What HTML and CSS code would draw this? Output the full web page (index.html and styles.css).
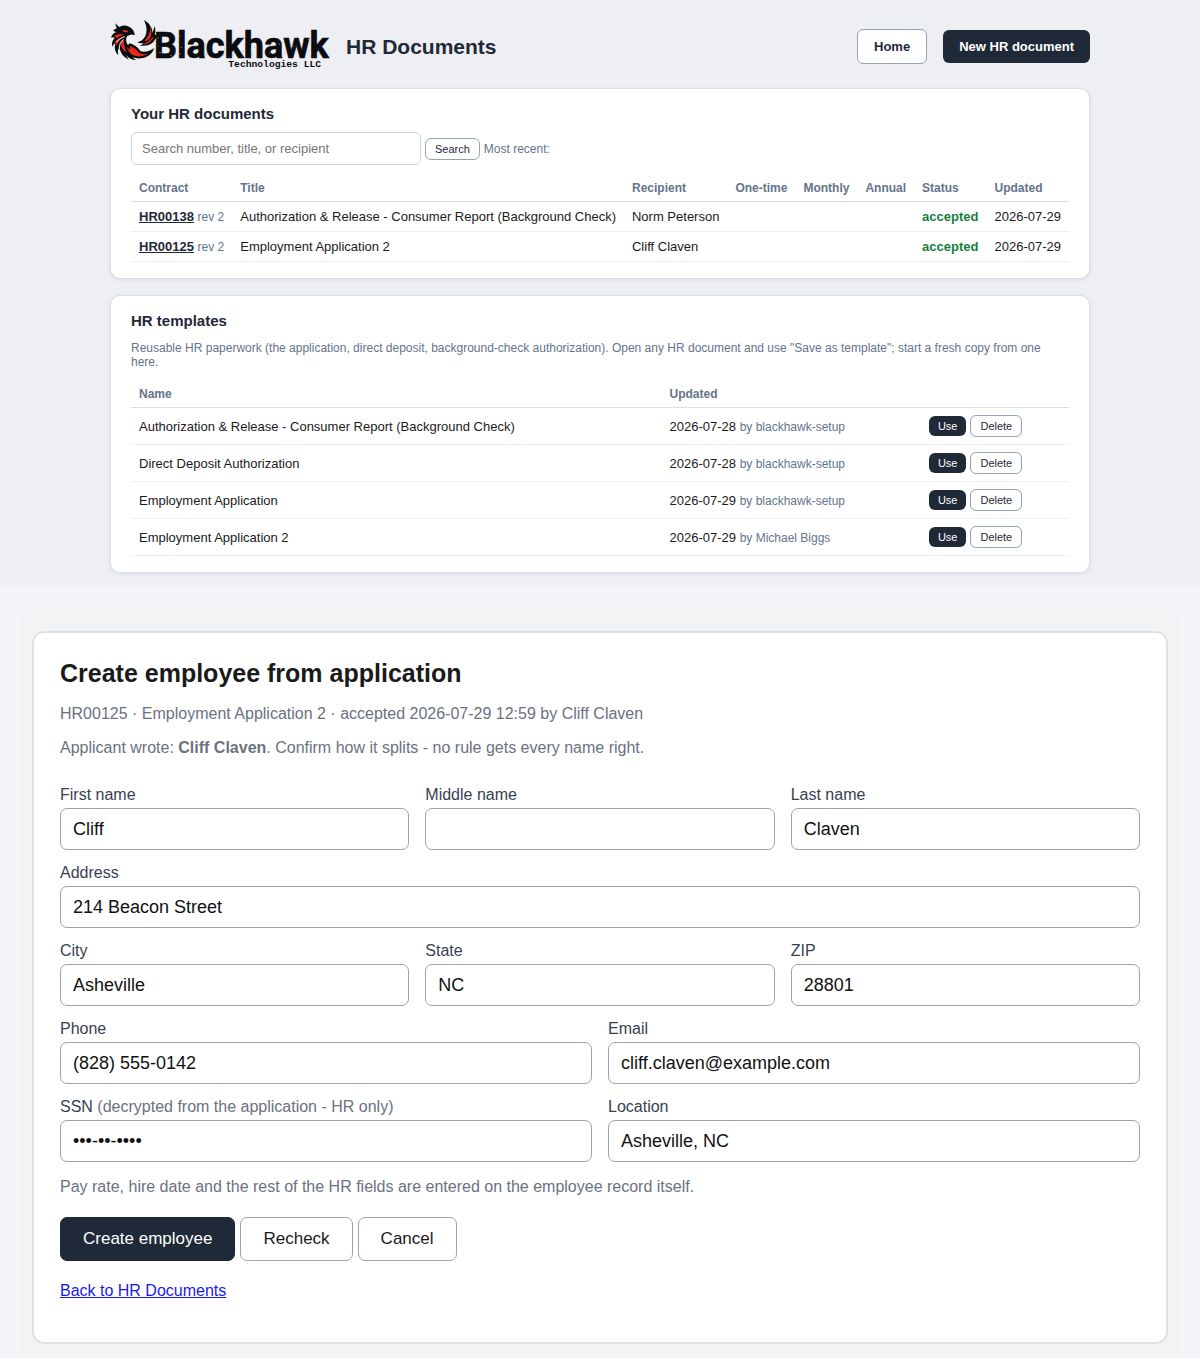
FILE: index.html
```html
<!DOCTYPE html>
<html lang="en">
<head>
<meta charset="UTF-8">
<meta name="viewport" content="width=device-width, initial-scale=1">
<title>HR Documents</title>
<link rel="stylesheet" href="styles.css">
</head>
<body>

<div class="docs">
  <div class="wrap">
    <header class="top">
      <svg class="logo" viewBox="30 30 660 150" role="img" aria-label="Blackhawk Technologies LLC">
        <!-- hawk -->
        <path fill="#0b0c0f" d="M45 40 L58 51 Q76 42 90 52 Q103 60 104 76 Q94 71 88 76 Q80 77 79 84 Q76 94 84 106 L88 100 Q108 104 122 124 Q144 128 163 114 Q154 138 133 143 Q112 148 98 142 Q104 148 109 150 Q88 149 78 134 L86 149 Q62 138 58 112 Q51 122 55 136 Q40 122 46 100 Q40 102 37 111 Q33 95 44 84 Q38 80 33 83 Q37 69 50 66 Q43 66 39 61 Q46 58 50 54 Z"/>
        <path fill="#0b0c0f" d="M132 30 Q156 44 158 68 L164 48 Q168 60 165 75 L176 76 Q166 86 160 96 Q146 110 119 107 Q128 104 131 99 Q120 101 112 97 Q128 92 135 80 Q146 60 132 30 Z"/>
        <path fill="#e8291c" d="M66 62 Q78 56 86 66 Q74 68 66 62 Z M42 78 Q56 68 72 74 Q58 78 50 84 Z M44 97 Q50 86 66 85 Q54 94 50 104 Z M62 100 Q64 92 72 88 Q70 108 80 126 Q64 120 62 100 Z M80 110 L90 120 L90 108 Q108 114 116 128 Q130 134 146 132 Q118 144 100 136 Q86 128 80 110 Z"/>
        <path fill="#e8291c" d="M152 50 Q158 74 147 88 Q138 95 133 93 Q150 76 152 50 Z M162 78 Q156 96 138 102 Q132 103 130 102 Q146 96 162 78 Z"/>
        <path fill="none" stroke="#eeeff3" stroke-width="3" d="M50 96 Q56 84 74 80 M58 114 Q57 98 70 88"/>
        <text class="logo-name" x="162" y="143">Blackhawk</text>
        <text class="logo-sub" x="385" y="171">Technologies LLC</text>
        <!-- worn print on the lettering -->
        <path class="logo-wear" d="M172 84h3M178 128h4M174 108h2M206 118h3M212 136h3M240 78h2M243 112h3M239 132h3M262 134h3M286 108h3M288 129h2M314 104h3M318 134h3M368 82h2M372 118h3M369 136h2M396 134h3M426 84h2M428 124h3M462 112h2M456 134h3M506 108h3M488 132h3M507 129h2M536 102h3M552 128h2M578 108h3M590 120h2M624 88h2M626 122h3M655 132h3"/>
      </svg>
      <h1>HR Documents</h1>
      <nav class="actions">
        <a class="btn light" href="#">Home</a>
        <a class="btn" href="#">New HR document</a>
      </nav>
    </header>

    <section class="card">
      <h2>Your HR documents</h2>
      <form class="search">
        <input type="search" aria-label="Search HR documents" placeholder="Search number, title, or recipient">
        <button class="small light" type="submit">Search</button>
        <span class="muted">Most recent:</span>
      </form>
      <table>
        <thead>
          <tr><th>Contract</th><th>Title</th><th>Recipient</th><th>One-time</th><th>Monthly</th><th>Annual</th><th>Status</th><th>Updated</th></tr>
        </thead>
        <tbody>
          <tr>
            <td><a class="num" href="#">HR00138</a> <span class="muted">rev 2</span></td>
            <td>Authorization &amp; Release - Consumer Report (Background Check)</td>
            <td>Norm Peterson</td>
            <td></td><td></td><td></td>
            <td class="accepted">accepted</td>
            <td>2026-07-29</td>
          </tr>
          <tr>
            <td><a class="num" href="#">HR00125</a> <span class="muted">rev 2</span></td>
            <td>Employment Application 2</td>
            <td>Cliff Claven</td>
            <td></td><td></td><td></td>
            <td class="accepted">accepted</td>
            <td>2026-07-29</td>
          </tr>
        </tbody>
      </table>
    </section>

    <section class="card">
      <h2>HR templates</h2>
      <p class="muted">Reusable HR paperwork (the application, direct deposit, background-check authorization). Open any HR document and use "Save as template"; start a fresh copy from one here.</p>
      <table>
        <thead>
          <tr><th>Name</th><th>Updated</th><th></th></tr>
        </thead>
        <tbody>
          <tr>
            <td>Authorization &amp; Release - Consumer Report (Background Check)</td>
            <td>2026-07-28 <span class="muted">by blackhawk-setup</span></td>
            <td><div class="row-btns"><button class="small">Use</button><button class="small light">Delete</button></div></td>
          </tr>
          <tr>
            <td>Direct Deposit Authorization</td>
            <td>2026-07-28 <span class="muted">by blackhawk-setup</span></td>
            <td><div class="row-btns"><button class="small">Use</button><button class="small light">Delete</button></div></td>
          </tr>
          <tr>
            <td>Employment Application</td>
            <td>2026-07-29 <span class="muted">by blackhawk-setup</span></td>
            <td><div class="row-btns"><button class="small">Use</button><button class="small light">Delete</button></div></td>
          </tr>
          <tr>
            <td>Employment Application 2</td>
            <td>2026-07-29 <span class="muted">by Michael Biggs</span></td>
            <td><div class="row-btns"><button class="small">Use</button><button class="small light">Delete</button></div></td>
          </tr>
        </tbody>
      </table>
    </section>
  </div>
</div>

<div class="create">
  <div class="panel">
    <form class="employee">
      <h2>Create employee from application</h2>
      <p>HR00125 · Employment Application 2 · accepted 2026-07-29 12:59 by Cliff Claven</p>
      <p>Applicant wrote: <b>Cliff Claven</b>. Confirm how it splits - no rule gets every name right.</p>

      <div class="fields">
        <div class="field third">
          <label for="first">First name</label>
          <input id="first" type="text" value="Cliff">
        </div>
        <div class="field third">
          <label for="middle">Middle name</label>
          <input id="middle" type="text">
        </div>
        <div class="field third">
          <label for="last">Last name</label>
          <input id="last" type="text" value="Claven">
        </div>
        <div class="field full">
          <label for="address">Address</label>
          <input id="address" type="text" value="214 Beacon Street">
        </div>
        <div class="field third">
          <label for="city">City</label>
          <input id="city" type="text" value="Asheville">
        </div>
        <div class="field third">
          <label for="state">State</label>
          <input id="state" type="text" value="NC">
        </div>
        <div class="field third">
          <label for="zip">ZIP</label>
          <input id="zip" type="text" value="28801">
        </div>
        <div class="field half">
          <label for="phone">Phone</label>
          <input id="phone" type="tel" value="(828) 555-0142">
        </div>
        <div class="field half">
          <label for="email">Email</label>
          <input id="email" type="email" value="cliff.claven@example.com">
        </div>
        <div class="field half">
          <label for="ssn">SSN <span>(decrypted from the application - HR only)</span></label>
          <input id="ssn" type="text" value="•••-••-••••">
        </div>
        <div class="field half">
          <label for="location">Location</label>
          <input id="location" type="text" value="Asheville, NC">
        </div>
      </div>

      <p>Pay rate, hire date and the rest of the HR fields are entered on the employee record itself.</p>
      <div class="buttons">
        <button type="submit">Create employee</button>
        <button class="light" type="button">Recheck</button>
        <button class="light" type="button">Cancel</button>
      </div>
      <a class="back" href="#">Back to HR Documents</a>
    </form>
  </div>
</div>

</body>
</html>
```
FILE: styles.css
```css
* {
  box-sizing: border-box;
}
body {
  margin: 0;
  font-family: "Liberation Sans", Arial, sans-serif;
  font-size: 13px;
  color: #1a1a1a;
  background: #f4f5f8;
}
h1, h2, p {
  margin: 0;
}
button, input {
  font-family: inherit;
}

/* documents list */
.docs {
  background: #eeeff3;
  padding: 20px 20px 12px;
}
.wrap {
  max-width: 980px;
  margin: 0 auto;
}
.top {
  display: flex;
  align-items: center;
  gap: 16px;
  height: 53px;
  margin-bottom: 15px;
}
.logo {
  align-self: flex-start;
  width: 220px;
  height: 50px;
}
.logo-name {
  font: bold 108px Roboto, "Liberation Sans", sans-serif;
  fill: #0b0c0f;
  stroke: #0b0c0f;
  stroke-width: 2px;
}
.logo-sub {
  font: bold 29px "Liberation Mono", monospace;
  fill: #0b0c0f;
}
.logo-wear {
  fill: none;
  stroke: #a5a6aa;
  stroke-width: 3px;
}
h1 {
  font-size: 21px;
  color: #1f2937;
}
.actions {
  display: flex;
  align-items: center;
  gap: 16px;
  margin-left: auto;
}
.btn {
  padding: 9px 16px;
  border-radius: 6px;
  background: #1f2937;
  color: #fff;
  font-weight: bold;
  line-height: 15px;
  text-decoration: none;
}
.btn.light {
  border: 1px solid #94a3b8;
  background: #fff;
  color: #1f2937;
}
.card {
  padding: 16px 20px;
  border: 1px solid #d8dde6;
  border-radius: 10px;
  background: #fff;
  box-shadow: 0 1px 4px rgba(31, 41, 55, 0.08);
}
.card + .card {
  margin-top: 16px;
}
.card h2 {
  margin-bottom: 10px;
  font-size: 15px;
  line-height: 17px;
  color: #1f2937;
}
.card p {
  margin: 12px 0 11px;
  line-height: 14px;
}
.muted {
  font-size: 12px;
  color: #64748b;
}
.search {
  display: flex;
  align-items: center;
  gap: 4px;
  margin-bottom: 9px;
}
.search input {
  width: 290px;
  height: 33px;
  padding: 0 10px;
  border: 1px solid #cbd5e1;
  border-radius: 6px;
  font-size: 13px;
}
.small {
  padding: 4px 9px;
  border: 0;
  border-radius: 6px;
  background: #1f2937;
  color: #fff;
  font-size: 11px;
  line-height: 12px;
}
.small.light {
  border: 1px solid #94a3b8;
  background: #fff;
  color: #1f2937;
}
.row-btns {
  display: flex;
  align-items: center;
  gap: 4px;
}
table {
  width: 100%;
  border-collapse: collapse;
}
th, td {
  padding: 7px 8px;
  text-align: left;
  border-bottom: 1px solid #eceef2;
}
th {
  padding-bottom: 6px;
  font-size: 12px;
  line-height: 14px;
  color: #64748b;
  border-bottom-color: #d8dde6;
}
.num {
  font-weight: bold;
  color: #1f2937;
}
.accepted {
  font-weight: bold;
  color: #15803d;
}

/* create employee */
.create {
  padding: 27px 20px 0;
}
.panel {
  padding: 19px 12px 14px;
  background: #f2f3f5;
}
.employee {
  padding: 26px;
  border: 2px solid #dfe1e6;
  border-radius: 12px;
  background: #fff;
}
.employee h2 {
  margin-bottom: 18px;
  font-size: 25px;
  line-height: 28px;
  color: #1a1a1a;
}
.employee p {
  margin-bottom: 16px;
  font-size: 16px;
  line-height: 18px;
  color: #6b7280;
}
.fields {
  display: grid;
  grid-template-columns: repeat(6, 1fr);
  gap: 14px 16px;
  margin: 29px 0 16px;
}
.third {
  grid-column: span 2;
}
.half {
  grid-column: span 3;
}
.full {
  grid-column: span 6;
}
.field label {
  display: block;
  margin-bottom: 4px;
  font-size: 16px;
  line-height: 18px;
  color: #374151;
}
.field label span {
  color: #6b7280;
}
.field input {
  display: block;
  width: 100%;
  height: 42px;
  padding: 0 12px;
  border: 1px solid #9ca3af;
  border-radius: 7px;
  background: #fff;
  font-size: 18px;
  color: #111;
}
.buttons {
  display: flex;
  gap: 5px;
  margin: 21px 0;
}
.buttons button {
  padding: 0 22px;
  height: 44px;
  border: 1px solid #1f2937;
  border-radius: 7px;
  background: #1f2937;
  color: #fff;
  font-size: 17px;
}
.buttons .light {
  border-color: #9ca3af;
  background: #fff;
  color: #1a1a1a;
}
.back {
  display: block;
  width: fit-content;
  margin-bottom: 16px;
  font-size: 16px;
  line-height: 18px;
  color: #1a1aee;
}
```
